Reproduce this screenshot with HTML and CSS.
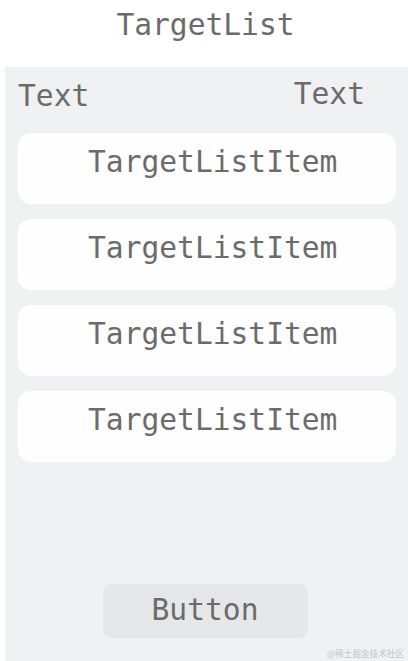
FILE: index.html
```html
<!DOCTYPE html>
<html lang="en">
<head>
	<meta charset="utf-8">
	<meta name="viewport" content="width=device-width, initial-scale=1">
	<title>TargetList</title>
	<link rel="stylesheet" href="styles.css">
</head>
<body>
	<header class="title">TargetList</header>
	<main class="panel">
		<div class="text-row">
			<span class="label">Text</span>
			<span class="label label-right">Text</span>
		</div>
		<ul class="items">
			<li class="item">TargetListItem</li>
			<li class="item">TargetListItem</li>
			<li class="item">TargetListItem</li>
			<li class="item">TargetListItem</li>
		</ul>
		<button class="btn" type="button">Button</button>
		<span class="watermark">@稀土掘金技术社区</span>
	</main>
</body>
</html>
```

FILE: styles.css
```css
*{
	margin: 0;
	padding: 0;
	box-sizing: border-box;
}
body{
	background-color: #ffffff;
	color: #6b6b6b;
	font-family: "DejaVu Sans Mono", "Liberation Mono", monospace;
	font-size: 29.6px;
	line-height: 1;
}
.title{
	height: 67px;
	padding-top: 11px;
	padding-left: 3px;
	text-align: center;
}
.panel{
	position: relative;
	display: flex;
	flex-direction: column;
	height: calc(100vh - 67px);
	margin-left: 5px;
	padding-top: 15px;
	padding-bottom: 23px;
	background-color: #f0f1f3;
}
.text-row{
	display: flex;
	justify-content: space-between;
	align-items: flex-start;
	padding-left: 13px;
	padding-right: 43px;
}
.label-right{
	margin-top: -2px;
}
.items{
	list-style: none;
	display: flex;
	flex-direction: column;
	gap: 15px;
	margin: 21px 12px 0 13px;
}
.item{
	height: 71px;
	padding: 15px 0 0 70px;
	background-color: #fefefe;
	border-radius: 13px;
}
.btn{
	align-self: center;
	width: 205px;
	height: 54px;
	margin-top: auto;
	margin-right: 3px;
	border: none;
	border-radius: 9px;
	background-color: #e6e7e9;
	color: #6b6b6b;
	font: inherit;
}
.watermark{
	position: absolute;
	right: 4px;
	bottom: 3px;
	color: #c4c4c4;
	font-family: "Noto Sans CJK SC", sans-serif;
	font-size: 8.6px;
}
```
